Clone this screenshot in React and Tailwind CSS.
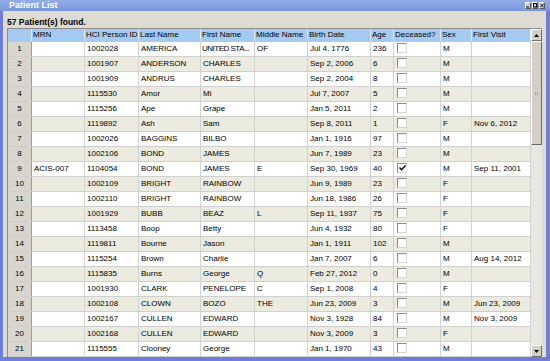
import React from 'react';

const cols = [
  { key: 'mrn', label: 'MRN', w: 'w-[53px]' },
  { key: 'hci', label: 'HCI Person ID', w: 'w-[54px]' },
  { key: 'last', label: 'Last Name', w: 'w-[62px]' },
  { key: 'first', label: 'First Name', w: 'w-[54px]' },
  { key: 'middle', label: 'Middle Name', w: 'w-[53px]' },
  { key: 'birth', label: 'Birth Date', w: 'w-[63px]' },
  { key: 'age', label: 'Age', w: 'w-[23px]' },
  { key: 'dead', label: 'Deceased?', w: 'w-[47px]' },
  { key: 'sex', label: 'Sex', w: 'w-[31px]' },
  { key: 'visit', label: 'First Visit', w: 'w-[59px]' },
];

// mrn, hci, last, first, middle, birth, age, dead, sex, visit
const patients = [
  ['', '1002028', 'AMERICA', 'UNITED STA...', 'OF', 'Jul 4, 1776', '236', false, 'M', ''],
  ['', '1001907', 'ANDERSON', 'CHARLES', '', 'Sep 2, 2006', '6', false, 'M', ''],
  ['', '1001909', 'ANDRUS', 'CHARLES', '', 'Sep 2, 2004', '8', false, 'M', ''],
  ['', '1115530', 'Amor', 'Mi', '', 'Jul 7, 2007', '5', false, 'M', ''],
  ['', '1115256', 'Ape', 'Grape', '', 'Jan 5, 2011', '2', false, 'M', ''],
  ['', '1119892', 'Ash', 'Sam', '', 'Sep 8, 2011', '1', false, 'F', 'Nov 6, 2012'],
  ['', '1002026', 'BAGGINS', 'BILBO', '', 'Jan 1, 1916', '97', false, 'M', ''],
  ['', '1002106', 'BOND', 'JAMES', '', 'Jun 7, 1989', '23', false, 'M', ''],
  ['ACIS-007', '1104054', 'BOND', 'JAMES', 'E', 'Sep 30, 1969', '40', true, 'M', 'Sep 11, 2001'],
  ['', '1002109', 'BRIGHT', 'RAINBOW', '', 'Jun 9, 1989', '23', false, 'F', ''],
  ['', '1002110', 'BRIGHT', 'RAINBOW', '', 'Jun 18, 1986', '26', false, 'F', ''],
  ['', '1001929', 'BUBB', 'BEAZ', 'L', 'Sep 11, 1937', '75', false, 'F', ''],
  ['', '1113458', 'Boop', 'Betty', '', 'Jun 4, 1932', '80', false, 'F', ''],
  ['', '1119811', 'Bourne', 'Jason', '', 'Jan 1, 1911', '102', false, 'M', ''],
  ['', '1115254', 'Brown', 'Charlie', '', 'Jan 7, 2007', '6', false, 'M', 'Aug 14, 2012'],
  ['', '1115835', 'Burns', 'George', 'Q', 'Feb 27, 2012', '0', false, 'M', ''],
  ['', '1001930', 'CLARK', 'PENELOPE', 'C', 'Sep 1, 2008', '4', false, 'F', ''],
  ['', '1002108', 'CLOWN', 'BOZO', 'THE', 'Jun 23, 2009', '3', false, 'M', 'Jun 23, 2009'],
  ['', '1002167', 'CULLEN', 'EDWARD', '', 'Nov 3, 1928', '84', false, 'M', 'Nov 3, 2009'],
  ['', '1002168', 'CULLEN', 'EDWARD', '', 'Nov 3, 2009', '3', false, 'F', ''],
  ['', '1115555', 'Clooney', 'George', '', 'Jan 1, 1970', '43', false, 'M', ''],
];

function Checkbox({ checked }) {
  return (
    <div className="ml-px mt-px w-[10px] h-[10px] bg-white border-t border-l border-[#8a8a8a] border-r border-b border-r-[#d8d6d0] border-b-[#d8d6d0] flex items-center justify-center">
      {checked && (
        <svg width="7" height="6" viewBox="0 0 7 6">
          <path d="M0.5 2.5 L2.5 4.8 L6.5 0.5" fill="none" stroke="#000" strokeWidth="1.4" />
        </svg>
      )}
    </div>
  );
}

function TitleButton({ kind }) {
  return (
    <div className="w-[6px] h-[7px] bg-[#d4d0c8] border-t border-l border-white border-r border-b border-r-[#5a5a5a] border-b-[#5a5a5a] flex items-center justify-center">
      <svg width="4" height="5" viewBox="0 0 4 5">
        {kind === 'min' && <rect x="0" y="3.5" width="3" height="1" fill="#000" />}
        {kind === 'max' && <rect x="0.5" y="0.5" width="3" height="3.5" fill="none" stroke="#000" strokeWidth="1" />}
        {kind === 'close' && <path d="M0 0.5 L4 4.5 M4 0.5 L0 4.5" stroke="#000" strokeWidth="0.9" />}
      </svg>
    </div>
  );
}

function ScrollButton({ dir }) {
  return (
    <div className="h-[12px] bg-[#d4d0c8] border-t border-l border-white border-r border-b border-r-[#6d6d6d] border-b-[#6d6d6d] flex items-center justify-center">
      <svg width="5" height="3" viewBox="0 0 5 3">
        {dir === 'up' ? <path d="M0 3 L2.5 0 L5 3 Z" fill="#000" /> : <path d="M0 0 L5 0 L2.5 3 Z" fill="#000" />}
      </svg>
    </div>
  );
}

export default function App() {
  return (
    <div className="w-[550px] h-[361px] overflow-hidden bg-[#6f7dda] flex flex-col font-['Liberation_Sans',Arial,sans-serif] text-black">
      {/* Title bar */}
      <div className="h-[11px] shrink-0 bg-gradient-to-b from-[#93ade9] to-[#7896dd] flex items-center justify-between pl-[9px] pr-[5px]">
        <span className="text-white font-bold text-[9px] leading-[11px]">Patient List</span>
        <div className="flex gap-px items-center">
          <TitleButton kind="min" />
          <TitleButton kind="max" />
          <TitleButton kind="close" />
        </div>
      </div>

      <div className="flex-1 min-h-0 ml-[3px] mr-[4px] mb-[4px] bg-[#dedbd3] flex flex-col">
        <div className="h-[17px] shrink-0 pt-[6px] pl-[4px] text-[8.5px] font-bold leading-[10px]">57 Patient(s) found.</div>

        <div className="flex-1 min-h-0 flex pl-[4px]">
          {/* Table */}
          <div className="w-[524px] border-l border-t border-[#8c8c8c] overflow-hidden bg-white text-[8px]">
            <div className="flex h-[13px] bg-[#a5caf2] border-b border-[#c6c6c6]">
              <div className="w-[24px] border-r border-[#dde9f7]" />
              {cols.map((c) => (
                <div key={c.key} className={`${c.w} border-r border-[#dde9f7] pl-px leading-[12px] whitespace-nowrap overflow-hidden`}>
                  {c.label}
                </div>
              ))}
            </div>

            {patients.map((p, i) => (
              <div key={i} className={`flex h-[15px] border-b border-[#cfcfcf] ${i % 2 === 1 ? 'bg-[#ecebdf]' : 'bg-white'}`}>
                <div className="w-[24px] bg-[#d9d6ce] border-r border-[#9c9c9c] text-center leading-[14px]">{i + 1}</div>
                {cols.map((c, j) => (
                  <div
                    key={c.key}
                    className={`${c.w} border-r border-[#d2d2d2] pl-[2px] leading-[14px] whitespace-nowrap overflow-hidden ${
                      typeof p[j] === 'string' && p[j].length > 11 && c.key === 'first' ? 'tracking-[-0.5px] pl-px' : ''
                    }`}
                  >
                    {c.key === 'dead' ? <Checkbox checked={p[j]} /> : p[j]}
                  </div>
                ))}
              </div>
            ))}
          </div>

          {/* Scrollbar */}
          <div className="w-[11px] flex flex-col bg-[#e9e7e1] border-t border-[#8c8c8c]">
            <ScrollButton dir="up" />
            <div className="h-[104px] bg-[#d4d0c8] border-t border-l border-white border-r border-b border-r-[#6d6d6d] border-b-[#6d6d6d] flex items-center justify-center">
              <div className="grid grid-cols-2 gap-px">
                <div className="w-px h-px bg-[#8a8a8a]" />
                <div className="w-px h-px bg-[#8a8a8a]" />
                <div className="w-px h-px bg-[#8a8a8a]" />
                <div className="w-px h-px bg-[#8a8a8a]" />
              </div>
            </div>
            <div className="flex-1" />
            <ScrollButton dir="down" />
          </div>
        </div>
      </div>
    </div>
  );
}
